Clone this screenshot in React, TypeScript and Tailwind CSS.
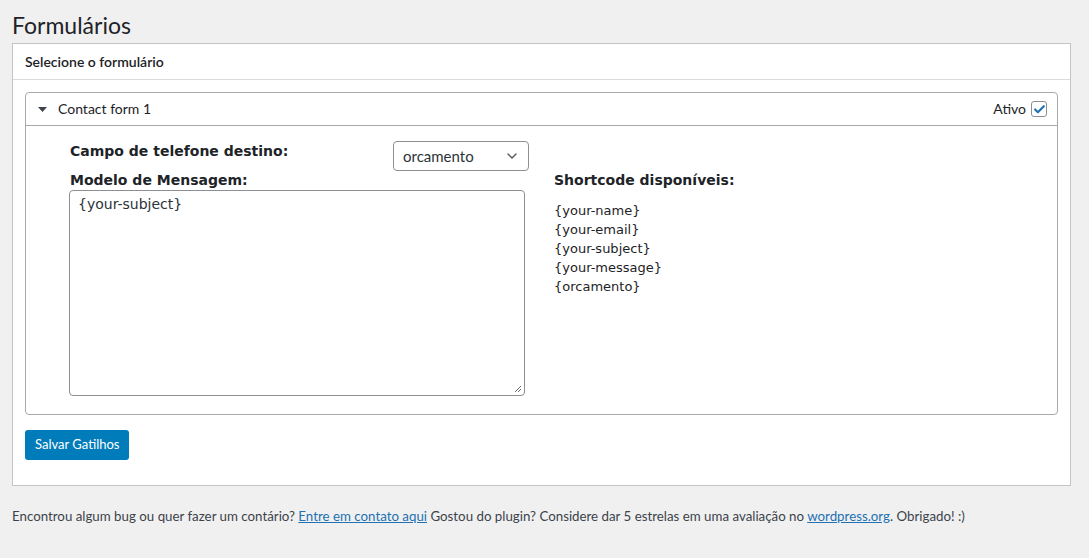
import { ChevronDown, Check } from "lucide-react";

const shortcodes = ["{your-name}", "{your-email}", "{your-subject}", "{your-message}", "{orcamento}"];

export default function App() {
  return (
    <div className="min-h-[558px] w-full bg-[#f0f0f1] pt-[11px] pr-[18px] pl-3 font-['Lato',sans-serif] text-[#1d2327]">
      <h1 className="text-[23px] leading-[29px] font-normal">Formulários</h1>

      <div className="mt-[3px] border border-[#c3c4c7] bg-white">
        <div className="border-b border-[#dcdcde] px-3 py-[9px] text-[14px] font-semibold leading-[17px]">
          Selecione o formulário
        </div>

        <div className="px-3 pt-3 pb-[25px]">
          <div className="rounded-[4px] border border-[#a7aaad]">
            <div className="flex h-[33px] items-center justify-between border-b border-[#a7aaad] pr-[10px] pl-3">
              <div className="flex items-center gap-[11px]">
                <svg width="9" height="5" viewBox="0 0 9 5">
                  <path d="M0 0h9L4.5 5z" fill="#3c434a" />
                </svg>
                <span className="text-[14px] leading-5">Contact form 1</span>
              </div>
              <div className="flex items-center gap-[5px]">
                <span className="text-[14px] leading-5">Ativo</span>
                <span className="flex h-4 w-4 items-center justify-center rounded-[3px] border border-[#8c8f94] bg-white">
                  <Check className="h-[13px] w-[13px] text-[#2271b1]" strokeWidth={4} />
                </span>
              </div>
            </div>

            <div className="flex gap-[29px] pt-[15px] pb-[18px] pl-[43px] font-['DejaVu_Sans',sans-serif]">
              <div className="flex w-[456px] flex-col">
                <div className="flex items-start justify-between pl-[1px]">
                  <span className="text-[14px] font-bold leading-5">Campo de telefone destino:</span>
                  <div className="mr-[-4px] flex h-[30px] w-[136px] items-center justify-between rounded-[4px] border border-[#8c8f94] pr-2 pl-[9px] font-['Lato',sans-serif] text-[15px] text-[#2c3338]">
                    <span>orcamento</span>
                    <ChevronDown className="h-4 w-4 text-[#50575e]" strokeWidth={2} />
                  </div>
                </div>
                <span className="mt-[-1px] pl-[1px] text-[14px] font-bold leading-5">Modelo de Mensagem:</span>
                <div className="relative h-[206px] rounded-[4px] border border-[#8c8f94] px-2 py-[3px] text-[14px] leading-5 text-[#2c3338]">
                  {"{your-subject}"}
                  <svg className="absolute right-[2px] bottom-[2px]" width="8" height="8" viewBox="0 0 8 8">
                    <path d="M1 7L7 1M4 7L7 4" stroke="#646970" strokeWidth="1" />
                  </svg>
                </div>
              </div>

              <div className="flex flex-col pt-[29px]">
                <span className="text-[14px] font-bold leading-5">Shortcode disponíveis:</span>
                <div className="mt-[11px] flex flex-col text-[13px] leading-[19px] text-[#1d2327]">
                  {shortcodes.map((s) => (
                    <span key={s}>{s}</span>
                  ))}
                </div>
              </div>
            </div>
          </div>

          <button className="mt-[15px] h-[30px] rounded-[3px] bg-[#007cba] px-[10px] text-[13px] text-white">
            Salvar Gatilhos
          </button>
        </div>
      </div>

      <p className="mt-[20px] text-[13.3px] leading-5 text-[#3c434a]">
        Encontrou algum bug ou quer fazer um contário?{" "}
        <a className="text-[#2271b1] underline">Entre em contato aqui</a> Gostou do plugin? Considere dar 5
        estrelas em uma avaliação no <a className="text-[#2271b1] underline">wordpress.org</a>. Obrigado! :)
      </p>
    </div>
  );
}
